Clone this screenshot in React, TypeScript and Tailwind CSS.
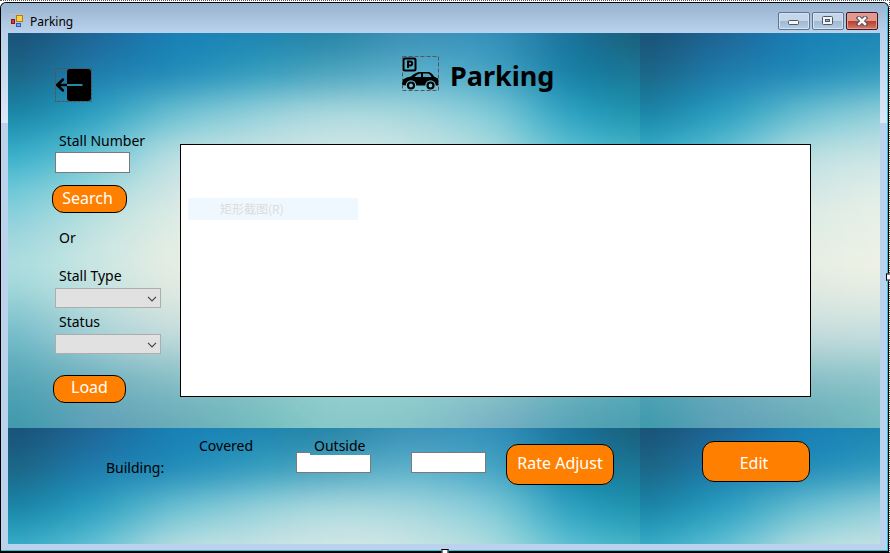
const TILE_W = 632;
const TILE_H = 395;
const XS = [0, 80, 160, 240, 320, 400, 480, 560, 632];
const YS = [0, 40, 80, 120, 160, 200, 240, 300, 350, 395];

// One list of colours for each position in XS, running down through YS.
const COLORS = [
  ["#1a5378", "#1b6788", "#1d86a8", "#38adc8", "#72c8d8", "#9ad5dd", "#a8dbdc", "#78bdcb", "#54a6b7", "#3f9bac"],
  ["#1e6797", "#1f7cab", "#2f9fc0", "#66c1d3", "#a0d8dc", "#c0e2e1", "#c6e4e1", "#a4d0d5", "#6fb0be", "#5fa1b8"],
  ["#1a7fb4", "#268eba", "#68bdd0", "#b0dbe0", "#d0e6e4", "#deece4", "#e2ebe2", "#c2dbdb", "#84bdc5", "#68acb8"],
  ["#1f86b2", "#389ebf", "#8ecdd9", "#c4e2e3", "#dfeee7", "#e8f0e7", "#ebefe4", "#c5dedd", "#8cc5c9", "#74bcbf"],
  ["#2a87a9", "#50a6c0", "#a6d6dd", "#d0e6e5", "#e0efe8", "#eaf1e8", "#ebefe4", "#c3dcdc", "#98d0d0", "#88c8c8"],
  ["#3c92b8", "#5cb0ca", "#a0d4dc", "#c8e4e4", "#d8e9e5", "#e2eee5", "#e2ebe2", "#c3dcdc", "#98d0d0", "#85c4c8"],
  ["#3490b9", "#48a4c3", "#7cc7d6", "#aadadd", "#c8e4e4", "#d8e9e5", "#d8e9e5", "#b0d4d8", "#8cc5c9", "#78b2c4"],
  ["#1c739a", "#1b82a7", "#30a2c0", "#60c0d2", "#98d4dc", "#b8dfe0", "#bde0e0", "#98cbd2", "#70b5c0", "#58a5b8"],
  ["#1a607c", "#1c7794", "#2194ae", "#48b4c8", "#80ccd8", "#a0d8dd", "#a8dbdc", "#7cbfcc", "#5cadbc", "#4a9fb0"],
];

type Rgb = number[];

const parse = (hex: string): Rgb => [1, 3, 5].map((i) => parseInt(hex.slice(i, i + 2), 16));

// Smooth curve through the given colours (Catmull-Rom), so that no band edges show.
function sample(stops: number[], values: Rgb[], at: number): Rgb {
  const last = stops.length - 1;
  let i = 0;
  while (i < last - 1 && at > stops[i + 1]) i++;
  const t = (at - stops[i]) / (stops[i + 1] - stops[i]);
  const [a, b, c, d] = [values[Math.max(i - 1, 0)], values[i], values[i + 1], values[Math.min(i + 2, last)]];
  return b.map((_, k) => {
    const v =
      0.5 *
      (2 * b[k] +
        (c[k] - a[k]) * t +
        (2 * a[k] - 5 * b[k] + 4 * c[k] - d[k]) * t * t +
        (3 * b[k] - a[k] - 3 * c[k] + d[k]) * t * t * t);
    return Math.round(Math.min(255, Math.max(0, v)));
  });
}

const GRID = COLORS.map((column) => column.map(parse));
const STRIP = 8;
const STRIPS = Array.from({ length: TILE_W / STRIP }, (_, s) => {
  const x = s * STRIP;
  const middle = x + STRIP / 2;
  const nodes = YS.map((_, r) => sample(XS, GRID.map((column) => column[r]), middle));
  const colors = Array.from({ length: 40 }, (_, k) => {
    const offset = k / 39;
    return { offset, color: `rgb(${sample(YS, nodes, offset * TILE_H).join(",")})` };
  });
  return { x, colors };
});

function Backdrop() {
  return (
    <svg className="absolute inset-0 h-full w-full" aria-hidden="true">
      <defs>
        {STRIPS.map((s, i) => (
          <linearGradient key={s.x} id={`strip${i}`} x1="0" y1="0" x2="0" y2={TILE_H} gradientUnits="userSpaceOnUse">
            {s.colors.map((c) => (
              <stop key={c.offset} offset={c.offset} stopColor={c.color} />
            ))}
          </linearGradient>
        ))}
        <linearGradient id="fade" x1="0" y1="0" x2="1" y2="0">
          <stop offset="0" stopColor="#fff" stopOpacity="0" />
          <stop offset="1" stopColor="#fff" stopOpacity="1" />
        </linearGradient>
        <mask id="soften" maskContentUnits="objectBoundingBox" x="0" y="0" width="1" height="1">
          <rect width="1" height="1" fill="url(#fade)" />
        </mask>
        <pattern id="tile" width={TILE_W} height={TILE_H} patternUnits="userSpaceOnUse">
          {STRIPS.map((s, i) => (
            <rect key={s.x} x={s.x} width={STRIP} height={TILE_H} fill={`url(#strip${Math.max(i - 1, 0)})`} />
          ))}
          {STRIPS.map((s, i) => (
            <rect key={s.x} x={s.x} width={STRIP} height={TILE_H} fill={`url(#strip${i})`} mask="url(#soften)" />
          ))}
        </pattern>
      </defs>
      <rect width="100%" height="100%" fill="url(#tile)" />
    </svg>
  );
}

function AppIcon() {
  return (
    <svg width="14" height="14" viewBox="0 0 14 14" aria-hidden="true">
      <path d="M.5 .5h13v13H.5z" fill="none" stroke="#c3c3c3" strokeDasharray="2 1" />
      <rect x="6.500" y="1.500" width="6" height="6" fill="#fbd344" stroke="#b07d10" />
      <rect x="1.500" y="5.500" width="3" height="4" fill="#d93a2c" stroke="#8f1515" />
      <rect x="6.500" y="9.500" width="4" height="3" fill="#6fa5f5" stroke="#2b5fc4" />
    </svg>
  );
}

function ExitIcon() {
  return (
    <svg width="37" height="34" viewBox="0 0 37 34" aria-hidden="true">
      <rect x="12" y="1" width="24" height="32" rx="3" />
      <path d="M2 17h10M8 11.500l-6 5.500 6 5.500" fill="none" stroke="#000" strokeWidth="2.500" strokeLinecap="round" />
      <path d="M12 17h15.500" stroke="#2787a9" strokeWidth="2" />
      <rect x=".5" y=".5" width="36" height="33" fill="none" stroke="#555" strokeDasharray="3 1" />
    </svg>
  );
}

function CarIcon() {
  return (
    <svg width="37" height="35" viewBox="0 0 37 35" aria-hidden="true">
      <rect x="1.500" y="2.500" width="12" height="12" rx="1.500" fill="none" stroke="#000" strokeWidth="2" />
      <path d="M6 12V5.500h2.200a2 2 0 0 1 0 4H6" fill="none" stroke="#000" strokeWidth="2" />
      <path d="M0 29v-4q1-3 9-4.500 4.500-4.500 9-4.500h8q3.500 0 6 4.500l4 2 1 5.500-1 1.500h-2.200a5.300 5.300 0 0 0-10.600 0h-8.900a5.300 5.300 0 0 0-10.600 0z" />
      <path d="M12.500 21q3-3.500 6.500-3.500v3.500zM21 17.500h4.500q2.500 0 4 3.500H21z" fill="#4ea8c5" />
      <circle cx="9" cy="29.500" r="3" fill="#7cc0d2" stroke="#000" strokeWidth="2.200" />
      <circle cx="28.500" cy="29.500" r="3" fill="#7cc0d2" stroke="#000" strokeWidth="2.200" />
      <rect x=".5" y=".5" width="36" height="34" fill="none" stroke="#555" strokeDasharray="4 2" />
    </svg>
  );
}

const captionButton =
  "flex h-[18px] w-8 items-center justify-center rounded-xs border border-[#5c7392] bg-linear-to-b from-[#c5d6e9] from-50% via-[#9fb8d1] via-50% to-[#b5cce4] to-100% shadow-[inset_0_0_0_1px_#d5e3f1]";

const pill =
  "flex items-center justify-center border border-black bg-[#ff8000] text-base leading-5 text-white";

const textBox = "block h-[21px] w-[75px] border border-[#7a7a7a] bg-white px-1 text-sm outline-none";

function TitleBar() {
  return (
    <header className="flex h-[30px] items-center bg-linear-to-b from-[#98b3d0] to-[#bad2ec] pt-1.5 pr-[9px] pl-[9px]">
      <AppIcon />
      <span className="ml-1.5 pt-0.5 text-xs">Parking</span>
      <div className="ml-auto flex gap-0.5">
        <button type="button" aria-label="Minimize" className={captionButton}>
          <svg width="12" height="12" aria-hidden="true">
            <rect x=".5" y="5.500" width="10" height="4" rx="1" fill="#f5f5f5" stroke="#4d5566" />
          </svg>
        </button>
        <button type="button" aria-label="Maximize" className={captionButton}>
          <svg width="12" height="10" aria-hidden="true">
            <rect x=".5" y=".5" width="10" height="8" rx="1" fill="#f5f5f5" stroke="#4d5566" />
            <rect x="3.500" y="3.500" width="4" height="2" fill="#8fb0d5" stroke="#4d5566" />
          </svg>
        </button>
        <button
          type="button"
          aria-label="Close"
          className="flex h-[18px] w-8 items-center justify-center rounded-xs border border-[#45141c] bg-linear-to-b from-[#e0998c] from-50% via-[#b83c22] via-50% to-[#d4786a] to-100% shadow-[inset_0_0_0_1px_#e0a097]"
        >
          <svg width="12" height="10" aria-hidden="true">
            <path d="M3 2l6 6M9 2l-6 6" stroke="#4d4a5c" strokeWidth="4.500" strokeLinecap="square" />
            <path d="M3 2l6 6M9 2l-6 6" stroke="#f5f5f5" strokeWidth="2.500" strokeLinecap="square" />
          </svg>
        </button>
      </div>
    </header>
  );
}

function DropDown({ id }: { id: string }) {
  return (
    <div className="relative mt-0.5 ml-[3px] w-[106px]">
      <select id={id} className="block h-5 w-full appearance-none border border-[#adadad] bg-[#e1e1e1] outline-none" />
      <svg className="pointer-events-none absolute top-2 right-1" width="10" height="6" aria-hidden="true">
        <path d="M1 .8l4 4 4-4" fill="none" stroke="#444" strokeWidth="1.200" />
      </svg>
    </div>
  );
}

function SearchPanel() {
  return (
    <form className="w-32 shrink-0" onSubmit={(e) => e.preventDefault()}>
      <label htmlFor="stall" className="ml-[7px] block">Stall Number</label>
      <input id="stall" className={`${textBox} mt-px ml-[3px]`} />
      <button type="submit" className={`${pill} mt-3 h-7 w-[75px] rounded-xl pr-1 pb-0.5`}>Search</button>
      <p className="mt-[15px] ml-[7px]">Or</p>
      <label htmlFor="type" className="mt-[18px] ml-[7px] block">Stall Type</label>
      <DropDown id="type" />
      <label htmlFor="status" className="mt-1 ml-[7px] block">Status</label>
      <DropDown id="status" />
      <button type="button" className={`${pill} mt-[21px] ml-px h-7 w-[73px] rounded-xl pb-1`}>Load</button>
    </form>
  );
}

function Rates() {
  return (
    <section className="flex items-start pr-[70px] pl-[98px]">
      <span className="mt-[22px] w-[93px]">Building:</span>
      <span className="w-[97px]">Covered</span>
      <div className="w-[115px]">
        <label htmlFor="covered" className="ml-[18px] block">Outside</label>
        <input
          id="covered"
          className={`${textBox} -mt-1 [clip-path:polygon(0_0,14px_0,14px_3px,100%_3px,100%_100%,0_100%)]`}
        />
      </div>
      <input aria-label="Outside rate" className={`${textBox} mt-4 mr-5`} />
      <button type="button" className={`${pill} mt-2 h-[41px] w-[108px] rounded-xl pb-1 whitespace-nowrap`}>Rate Adjust</button>
      <button type="button" className={`${pill} mt-[5px] ml-auto h-[41px] w-[108px] rounded-xl pt-0.5 pr-1`}>Edit</button>
    </section>
  );
}

export default function App() {
  return (
    <div className="relative flex min-h-screen flex-col border-t border-r border-dotted border-[#555] bg-white pt-px font-['Noto_Sans','Noto_Sans_CJK_SC',sans-serif] text-sm leading-5 text-black">
      <div className="flex grow flex-col rounded-t-md border border-b-2 border-black bg-[#bad2ec]">
        <div className="flex grow flex-col overflow-hidden rounded-t-md border-r border-b border-[#28c5de]">
          <TitleBar />
          <div className="flex grow bg-linear-to-b from-[#bad0ea] to-[#dce8f6] bg-size-[100%_90px] bg-no-repeat px-[7px] pb-1.5">
            <main className="relative grow">
              <Backdrop />
              <div className="relative">
                <div className="flex h-[98px] items-start pl-[47px]">
                  <button type="button" aria-label="Exit" className="mt-[35px]"><ExitIcon /></button>
                  <div className="mt-[23px] ml-[310px] flex items-start gap-[11px]">
                    <CarIcon />
                    <h1 className="text-[27px] leading-10 font-bold">Parking</h1>
                  </div>
                </div>
                <div className="flex items-start pr-[69px] pl-11">
                  <SearchPanel />
                  <section className="mt-[13px] min-h-[253px] grow border border-black bg-white pt-[53px] pl-[7px]">
                    <div className="h-[22px] w-[170px] bg-[#f0f8ff] pl-8 font-['Noto_Sans_CJK_SC',sans-serif] text-xs leading-[22px] text-[#dcdcdc]">
                      矩形截图(R)
                    </div>
                  </section>
                </div>
                <div className="pt-[33px]">
                  <Rates />
                </div>
              </div>
            </main>
          </div>
        </div>
      </div>
      <i className="absolute bottom-0 left-1/2 h-1 w-[7px] -translate-x-1/2 border border-b-0 border-black bg-white" />
      <i className="absolute top-1/2 -right-px h-[7px] w-1 -translate-y-1/2 border border-r-0 border-black bg-white" />
    </div>
  );
}
